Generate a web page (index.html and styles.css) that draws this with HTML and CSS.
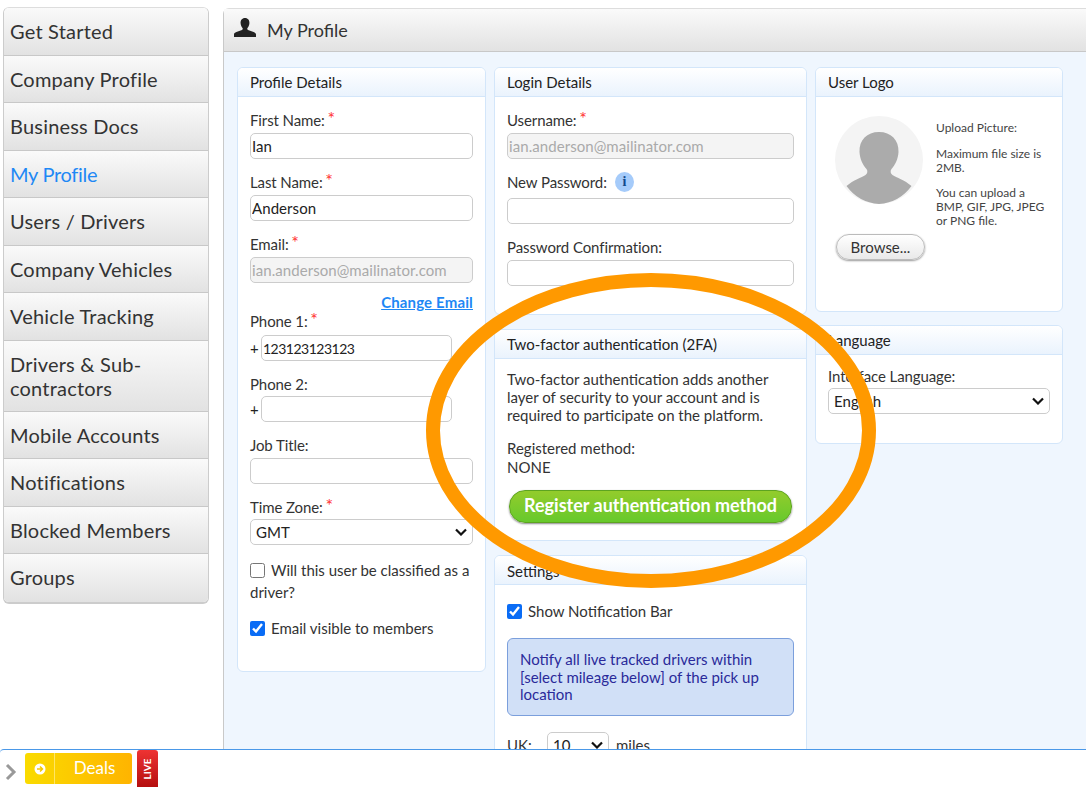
FILE: index.html
```html
<!DOCTYPE html>
<html lang="en">
<head>
<meta charset="utf-8">
<title>My Profile</title>
<link rel="stylesheet" href="styles.css">
</head>
<body>
<div class="page">
  <nav class="sidebar">
    <a class="nav-item">Get Started</a>
    <a class="nav-item">Company Profile</a>
    <a class="nav-item">Business Docs</a>
    <a class="nav-item active">My Profile</a>
    <a class="nav-item">Users / Drivers</a>
    <a class="nav-item">Company Vehicles</a>
    <a class="nav-item">Vehicle Tracking</a>
    <a class="nav-item tall">Drivers &amp; Sub-contractors</a>
    <a class="nav-item">Mobile Accounts</a>
    <a class="nav-item">Notifications</a>
    <a class="nav-item">Blocked Members</a>
    <a class="nav-item">Groups</a>
  </nav>
  <main class="main">
    <header class="main-head">
      <svg class="head-icon" width="22" height="20" viewBox="0 0 22 20"><path fill="#222" d="M11 0c3 0 4.600 2.400 4.400 5.200-.1 1.800-.8 3.500-1.900 4.800-.5.700-.3 1.500.5 1.900l5.600 2.200c1.400.6 2.400 1.200 2.400 2.300V19H0v-2.600c0-1.100 1-1.700 2.400-2.300L8 11.900c.8-.4 1-1.200.5-1.900C7.400 8.700 6.700 7 6.600 5.200 6.400 2.400 8 0 11 0z"/></svg>
      <h1>My Profile</h1>
    </header>
    <div class="columns">
      <div class="col col-1">
        <section class="card card-profile">
          <h2 class="card-head">Profile Details</h2>
          <div class="card-body">
            <label class="lbl">First Name: <i>*</i></label>
            <input class="field" type="text" value="Ian">
            <label class="lbl">Last Name: <i>*</i></label>
            <input class="field" type="text" value="Anderson">
            <label class="lbl">Email: <i>*</i></label>
            <input class="field" type="text" value="ian.anderson@mailinator.com" disabled>
            <a class="change-email">Change Email</a>
            <label class="lbl lbl-phone1">Phone 1: <i>*</i></label>
            <div class="phone"><span>+</span><input class="field" type="text" value="123123123123"></div>
            <label class="lbl lbl-close">Phone 2:</label>
            <div class="phone"><span>+</span><input class="field" type="text"></div>
            <label class="lbl">Job Title:</label>
            <input class="field" type="text">
            <label class="lbl lbl-close">Time Zone: <i>*</i></label>
            <select class="field select"><option>GMT</option></select>
            <label class="check check-first"><input type="checkbox">Will this user be classified as a driver?</label>
            <label class="check check-second"><input type="checkbox" checked>Email visible to members</label>
          </div>
        </section>
      </div>
      <div class="col col-2">
        <section class="card card-login">
          <h2 class="card-head">Login Details</h2>
          <div class="card-body">
            <label class="lbl">Username: <i>*</i></label>
            <input class="field" type="text" value="ian.anderson@mailinator.com" disabled>
            <label class="lbl lbl-info">New Password: <span class="info">i</span></label>
            <input class="field" type="password">
            <label class="lbl">Password Confirmation:</label>
            <input class="field" type="password">
          </div>
        </section>
        <section class="card card-2fa">
          <h2 class="card-head">Two-factor authentication (2FA)</h2>
          <div class="card-body">
            <p class="tf-text">Two-factor authentication adds another layer of security to your account and is required to participate on the platform.</p>
            <p class="tf-method">Registered method:<br>NONE</p>
            <button class="btn-green" type="button">Register authentication method</button>
          </div>
        </section>
        <section class="card card-settings">
          <h2 class="card-head">Settings</h2>
          <div class="card-body">
            <label class="check"><input type="checkbox" checked>Show Notification Bar</label>
            <div class="notice">Notify all live tracked drivers within [select mileage below] of the pick up location</div>
            <div class="miles"><span class="miles-lbl">UK:</span><select class="field select miles-sel"><option>10</option></select><span>miles</span></div>
          </div>
        </section>
      </div>
      <div class="col col-3">
        <section class="card card-logo">
          <h2 class="card-head">User Logo</h2>
          <div class="card-body logo-body">
            <div class="logo-left">
              <svg class="avatar" width="88" height="88" viewBox="0 0 88 88">
                <circle cx="44" cy="44" r="44" fill="#f4f4f4"/>
                <path fill="#ababab" d="M44 16c12 0 20 8 19.500 20-.3 7-3.500 13-7 17-1.500 2-1 4.500 1 6 4 2.500 12 5 19 11A44 44 0 0 1 44 88a44 44 0 0 1-32.500-18c7-6 15-8.500 19-11 2-1.500 2.500-4 1-6-3.500-4-6.700-10-7-17C24 24 32 16 44 16z"/>
              </svg>
              <button class="btn-browse" type="button">Browse...</button>
            </div>
            <div class="logo-text">
              <p class="up">Upload Picture:</p>
              <p>Maximum file size is 2MB.</p>
              <p>You can upload a BMP, GIF, JPG, JPEG or PNG file.</p>
            </div>
          </div>
        </section>
        <section class="card card-lang">
          <h2 class="card-head">Language</h2>
          <div class="card-body">
            <label class="lbl lbl-close">Interface Language:</label>
            <select class="field select"><option>English</option></select>
          </div>
        </section>
      </div>
    </div>
  </main>
  <svg class="ring" width="460" height="325" viewBox="0 0 460 325"><ellipse cx="229" cy="162.500" rx="218" ry="150.500" fill="none" stroke="#ff9900" stroke-width="14"/></svg>
</div>
<footer class="bar">
  <svg class="chev" width="12" height="18" viewBox="0 0 12 18"><path d="M2 2l7 7-7 7" fill="none" stroke="#999" stroke-width="3"/></svg>
  <div class="deals">
    <span class="deals-icon"><svg width="12" height="12" viewBox="0 0 12 12"><circle cx="6" cy="6" r="5.500" fill="#fff"/><path d="M3 6h5M6 3.500L8.500 6 6 8.500" fill="none" stroke="#f5c800" stroke-width="1.500"/></svg></span>
    <span class="deals-text">Deals</span>
  </div>
  <div class="live"><span>LIVE</span></div>
</footer>
</body>
</html>
```
FILE: styles.css
```css
* { box-sizing: border-box; }
html, body { margin: 0; height: 100%; overflow: hidden; }
body {
  width: 1086px; height: 787px; display: flex; flex-direction: column;
  font-family: "Lato", "Liberation Sans", sans-serif; color: #222; background: #fff;
}
.page { position: relative; flex: 1; min-height: 0; display: flex; align-items: flex-start; padding: 7px 0 0 3px; overflow: hidden; }
.sidebar {
  width: 206px; flex: none; border: 1px solid #ccc; border-bottom-width: 2px; border-top: 1px solid #ddd;
  border-radius: 6px; overflow: hidden;
}
.nav-item {
  display: block; height: 47.500px; padding: 11px 6px 0; font-size: 20px; line-height: 24px; color: #333; letter-spacing: .2px;
  background: linear-gradient(#fafafa, #e2e2e2); border-bottom: 1px solid #c8c8c8;
}
.nav-item:last-child { border-bottom: 0; }
.nav-item.tall { height: 71px; }
.nav-item.active { color: #1e88f5; letter-spacing: -.3px; }
.main {
  margin: 1px 0 0 14px; width: 880px; flex: none; height: 741px; background: #eff6fe;
  border-left: 1px solid #c9c9c9; border-top: 1px solid #ddd; border-top-left-radius: 6px;
}
.main-head {
  height: 43px; display: flex; align-items: center; padding: 0 0 0 10px; gap: 11px;
  background: linear-gradient(#fafafa, #e2e2e2); border-bottom: 1px solid #c8c8c8;
}
.head-icon { margin-top: -5px; }
.main-head h1 { margin: -1px 0 0; font-size: 18px; font-weight: 400; color: #333; }
.columns { display: flex; padding: 15px 0 0 13px; align-items: flex-start; }
.col { flex: none; display: flex; flex-direction: column; }
.col-1 { width: 249px; margin-right: 8px; }
.col-2 { width: 313px; margin-right: 8px; gap: 14px; }
.col-3 { width: 248px; gap: 13px; }
.card { background: #fff; border: 1px solid #d3e6fa; border-radius: 6px; overflow: hidden; }
.card-head {
  margin: 0; height: 29px; padding: 0 12px; font-size: 15px; line-height: 29px; font-weight: 400; color: #222;
  background: linear-gradient(#fff, #eaf3fd); border-bottom: 1px solid #d3e6fa;
}
.card-body { padding: 14px 12px 0; font-size: 15px; }
.card-profile { height: 605px; }
.card-login { height: 248px; }
.card-2fa { height: 212px; }
.card-settings { height: 260px; }
.card-logo { height: 245px; }
.card-lang { height: 119px; }
.card-2fa .card-body { padding-top: 11px; }
.card-settings .card-head { line-height: 31px; }
.card-settings .card-body { padding-top: 15px; }
.card-lang .card-body { padding-top: 12px; }
.lbl { display: block; font-size: 15px; line-height: 18px; height: 18px; margin-bottom: 4px; color: #333; letter-spacing: -.1px; }
.lbl i { font-style: normal; color: #f33; font-size: 18px; line-height: 0; margin-left: -1px; position: relative; top: -1px; }
.lbl-close { margin-bottom: 3px; }
.field {
  display: block; width: 100%; height: 26px; padding: 0 1px; margin: 0 0 14px; background: #fff; letter-spacing: .07px;
  border: 1px solid #ccc; border-radius: 5px; font: 15px "Lato", "Liberation Sans", sans-serif; color: #222;
}
.field:disabled { background: #f4f4f4; color: #aaa; }
.select {
  appearance: none; padding: 0 0 0 5px;
  background: #fff url("data:image/svg+xml,%3Csvg xmlns='http://www.w3.org/2000/svg' width='12' height='8' viewBox='0 0 12 8'%3E%3Cpath d='M1 1.500l5 5 5-5' fill='none' stroke='%23111' stroke-width='2.200'/%3E%3C/svg%3E") no-repeat right 5px center;
}
.change-email { display: block; margin: -4px 0 0; text-align: right; font-size: 15px; line-height: 18px; font-weight: 700; letter-spacing: .15px; color: #1e88f5; text-decoration: underline; }
.lbl-phone1 { margin-top: 1px; margin-bottom: 5px; }
.lbl-info { display: flex; align-items: center; gap: 8px; margin-bottom: 7px; }
.phone { display: flex; align-items: center; gap: 3px; width: 202px; margin-bottom: 14px; }
.phone span { font-size: 15px; width: 8px; }
.phone .field { flex: 1; min-width: 0; margin: 0; font-size: 14px; letter-spacing: -.5px; }
.check { display: block; font-size: 15px; line-height: 22px; color: #333; }
.check input { width: 15px; height: 15px; margin: 0 6px 0 0; vertical-align: -2px; accent-color: #0a6cf5; }
.check-first { margin-top: 14px; }
.check-second { margin-top: 14px; }
.info {
  flex: none; width: 19px; height: 20px; border-radius: 50%; background: #a5cbfa; color: #12488c;
  text-align: center; font: 700 14px/19px "Liberation Serif", serif;
}
.tf-text { margin: 0 0 15px; font-size: 15px; line-height: 18px; color: #333; }
.tf-method { margin: 0 0 13px; font-size: 15px; line-height: 19px; color: #333; }
.btn-green {
  display: block; width: 283px; height: 33px; margin: 0 0 0 2px; border: 1px solid #5da420; border-radius: 16px;
  background: linear-gradient(#93cc2c, #67c92c); color: #fff; font: 700 18px "Lato", "Liberation Sans", sans-serif;
  box-shadow: 0 1px 2px #888; padding: 0 0 4px;
}
.notice {
  margin: 16px 0 0; height: 78px; padding: 12px 12px 0; background: #d1e0f7; border: 1px solid #7b9fdc; border-radius: 6px;
  font-size: 15px; line-height: 17.500px; color: #2a2a9a;
}
.miles { display: flex; align-items: center; gap: 7px; margin-top: 16px; font-size: 15px; color: #333; }
.miles-lbl { width: 33px; }
.miles-sel { width: 62px; margin: 0; }
.logo-body { display: flex; padding: 19px 0 0 19px; gap: 13px; }
.logo-left { width: 88px; }
.avatar { display: block; }
.btn-browse {
  display: block; width: 89px; height: 26px; margin: 30px 0 0 1px; padding: 0; border: 1px solid #bbb; border-radius: 13px;
  background: linear-gradient(#fff, #e9e9e9); box-shadow: 0 1px 2px #999; font: 15px "Lato", "Liberation Sans", sans-serif; color: #333;
}
.logo-text { width: 118px; padding-top: 5px; font-size: 12px; line-height: 14px; color: #444; }
.logo-text p { margin: 0 0 11px; }
.logo-text .up { margin-bottom: 12px; }
.ring { position: absolute; left: 422px; top: 268px; }
.bar {
  flex: none; height: 38px; display: flex; align-items: flex-start; background: #fff; border-top: 1px solid #4a98e8; border-top-left-radius: 4px;
}
.chev { margin: 13px 0 0 5px; }
.deals {
  display: flex; align-items: stretch; width: 107px; height: 31px; margin: 3px 0 0 8px; border-radius: 3px; color: #fff;
  background: linear-gradient(90deg, #fadb00, #ffb400);
}
.deals-icon { width: 30px; display: flex; align-items: center; justify-content: center; border-right: 1px solid #ffe566; }
.deals-text { flex: 1; text-align: center; font-size: 17px; line-height: 29px; padding-left: 2px; }
.live {
  width: 21px; height: 37px; margin-left: 5px; display: flex; align-items: center; justify-content: center; border-radius: 3px 3px 0 0;
  background: linear-gradient(#ee3333, #b50f0f); color: #fff; font-size: 10px; font-weight: 700;
}
.live span { transform: rotate(-90deg); }
```
